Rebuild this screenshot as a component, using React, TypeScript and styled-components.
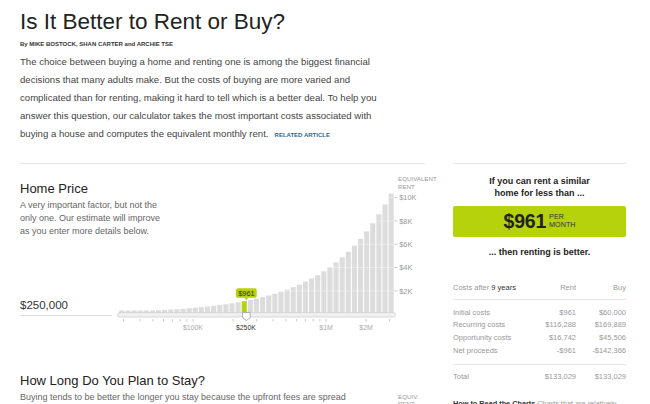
import React from 'react';
import styled, { createGlobalStyle } from 'styled-components';

const sans = `"Liberation Sans", Arial, Helvetica, sans-serif`;
const green = '#b5d20b';
const rule = '#e6e6e6';

const GlobalStyle = createGlobalStyle`
  html, body { margin: 0; padding: 0; background: #fff; }
  body { font-family: ${sans}; color: #333; overflow: hidden; }
  * { box-sizing: border-box; }
`;

const Page = styled.div`
  width: 650px;
  height: 404px;
  padding: 8px 0 0 20px;
  overflow: hidden;
`;

const Header = styled.header`
  width: 400px;
`;

const Title = styled.h1`
  margin: 0;
  font-size: 22.5px;
  line-height: 28px;
  font-weight: 400;
  color: #222;
  white-space: nowrap;
`;

const Byline = styled.div`
  margin-top: 3px;
  font-size: 6px;
  line-height: 10px;
  font-weight: 700;
  color: #333;
`;

const Lede = styled.p`
  margin: 4px 0 0;
  font-size: 9.6px;
  line-height: 18px;
  color: #444;
  white-space: nowrap;
`;

const Related = styled.a`
  margin-left: 6px;
  font-size: 6px;
  font-weight: 700;
  color: #326891;
  text-decoration: none;
`;

const Layout = styled.div`
  display: grid;
  grid-template-columns: 405px 173px;
  column-gap: 28px;
  margin-top: 19px;
  align-items: start;
`;

const MainColumn = styled.main`
  border-top: 1px solid ${rule};
`;

const SideColumn = styled.aside`
  border-top: 1px solid ${rule};
  padding-top: 11px;
`;

// chart and intro share one grid cell, intro sits over the empty left part of the chart
const Stack = styled.section`
  display: grid;
  & > * {
    grid-area: 1 / 1;
  }
`;

const Intro = styled.div`
  padding-top: 15px;
  align-self: start;
`;

const SectionTitle = styled.h2`
  margin: 0;
  font-size: 13px;
  line-height: 20px;
  font-weight: 400;
  color: #222;
  white-space: nowrap;
`;

const SectionText = styled.p`
  margin: 0;
  font-size: 9px;
  line-height: 13px;
  color: #666;
  white-space: nowrap;
`;

const ChartRow = styled.div`
  display: flex;
  align-items: flex-end;
  margin-top: 2px;
`;

const PriceField = styled.div`
  width: 92px;
  flex-shrink: 0;
  margin-bottom: 20px;
  padding-bottom: 2px;
  border-bottom: 1px solid #ddd;
`;

const PriceValue = styled.div`
  font-size: 11.5px;
  line-height: 16px;
  color: #333;
`;

const ChartSvg = styled.svg`
  display: block;
  flex-shrink: 0;
  overflow: visible;
  font-family: ${sans};
`;

const NextSection = styled.section`
  display: flex;
  margin-top: 35px;
`;

const NextIntro = styled.div`
  width: 378px;
`;

const AxisLabel = styled.div`
  padding-top: 21.5px;
  font-size: 6.2px;
  line-height: 7px;
  color: #999;
  text-transform: uppercase;
`;

const Verdict = styled.div`
  font-size: 9px;
  line-height: 12px;
  font-weight: 700;
  color: #222;
  text-align: center;
`;

const RentBox = styled.div`
  margin: 7px 0 9px;
  height: 31px;
  border-radius: 2px;
  background: ${green};
  display: flex;
  align-items: center;
  justify-content: center;
  gap: 3px;
`;

const RentValue = styled.span`
  font-size: 19.5px;
  font-weight: 700;
  color: #222;
  letter-spacing: -0.2px;
`;

const RentUnit = styled.span`
  font-size: 7.2px;
  line-height: 8px;
  color: #333;
  margin-top: -1px;
`;

const CostTable = styled.div`
  margin-top: 22.5px;
  font-size: 7.5px;
  color: #999;
`;

const CostGroup = styled.div<{ $pad: string; $line?: boolean }>`
  padding: ${(p) => p.$pad};
  border-bottom: ${(p) => (p.$line ? `1px solid ${rule}` : 'none')};
`;

const CostRow = styled.div<{ $tall?: boolean }>`
  display: grid;
  grid-template-columns: 1fr 60px 50px;
  line-height: ${(p) => (p.$tall ? '13px' : '12.67px')};
  white-space: nowrap;
`;

const Num = styled.span`
  text-align: right;
`;

const Strong = styled.span`
  color: #333;
`;

const ReadNote = styled.div`
  margin-top: 14.5px;
  font-size: 7.3px;
  line-height: 13px;
  color: #999;
  white-space: nowrap;
`;

const NoteHead = styled.b`
  color: #333;
`;

// chart geometry in page coordinates (viewBox matches the page offsets)
const BASE = 313.3;
const PER_K = 11.67;
const logX = (p: number) => 193 + (Math.log10(p) - 5) * 133;

const bars = Array.from({ length: 45 }, (_, i) => {
  const x = 119.3 + i * 6.12;
  const h = Math.max(3, 112.5 * Math.exp(0.0155 * (x + 2.55 - 387)));
  return { x, h, active: i === 20 };
});

const yTicks = [2, 4, 6, 8, 10];
const xTicks = [
  30e3, 40e3, 50e3, 60e3, 70e3, 80e3, 90e3, 100e3, 200e3, 300e3, 400e3, 500e3,
  600e3, 700e3, 800e3, 900e3, 1e6, 2e6, 3e6,
];
const xLabels = [
  { p: 100e3, t: '$100K' },
  { p: 250e3, t: '$250K', on: true },
  { p: 1e6, t: '$1M' },
  { p: 2e6, t: '$2M' },
];

function PriceChart() {
  return (
    <ChartSvg width={330} height={170} viewBox="112 165 330 170">
      {bars.map((b, i) => (
        <rect
          key={i}
          x={b.x}
          y={312.5 - b.h}
          width={5.1}
          height={b.h}
          fill={b.active ? green : '#dcdcdc'}
        />
      ))}
      {yTicks.map((v) => (
        <g key={v}>
          <line x1={118} x2={393} y1={BASE - v * PER_K} y2={BASE - v * PER_K} stroke="#fff" strokeOpacity={0.55} strokeWidth={0.8} />
          <line x1={394.5} x2={397.5} y1={BASE - v * PER_K} y2={BASE - v * PER_K} stroke="#bbb" strokeWidth={0.8} />
          <text x={399.3} y={BASE - v * PER_K + 2.6} fontSize={7.3} fill="#999">
            ${v}K
          </text>
        </g>
      ))}
      <text x={398} y={180.3} fontSize={6.2} fill="#999">EQUIVALENT</text>
      <text x={398} y={187.5} fontSize={6.2} fill="#999">RENT</text>

      <rect x={117.5} y={311.7} width={278} height={4.3} rx={2.1} fill="#f1f1f1" stroke="#cfcfcf" strokeWidth={0.8} />
      {xTicks.map((p) => (
        <line key={p} x1={logX(p)} x2={logX(p)} y1={318} y2={320.5} stroke="#bbb" strokeWidth={0.8} />
      ))}
      {xLabels.map((l) => (
        <text key={l.t} x={logX(l.p)} y={328.6} fontSize={6.9} fill={l.on ? '#333' : '#aaa'} textAnchor="middle">
          {l.t}
        </text>
      ))}

      <rect x={236} y={287.2} width={20.7} height={9.6} rx={1.8} fill={green} />
      <path d="M244.4,296.7 L246.4,299.3 L248.4,296.7 Z" fill={green} />
      <text x={246.4} y={294.6} fontSize={7.4} fill="#333" textAnchor="middle">$961</text>

      <path d="M242.6,311.4 H250.2 V316.6 L246.4,319.6 L242.6,316.6 Z" fill="#fff" stroke="#999" strokeWidth={0.8} strokeLinejoin="round" />
    </ChartSvg>
  );
}

const costs = [
  ['Initial costs', '$961', '$60,000'],
  ['Recurring costs', '$116,288', '$169,889'],
  ['Opportunity costs', '$16,742', '$45,506'],
  ['Net proceeds', '-$961', '-$142,366'],
];

export default function App() {
  return (
    <Page>
      <GlobalStyle />
      <Header>
        <Title>Is It Better to Rent or Buy?</Title>
        <Byline>By MIKE BOSTOCK, SHAN CARTER and ARCHIE TSE</Byline>
        <Lede>
          The choice between buying a home and renting one is among the biggest financial
          <br />
          decisions that many adults make. But the costs of buying are more varied and
          <br />
          complicated than for renting, making it hard to tell which is a better deal. To help you
          <br />
          answer this question, our calculator takes the most important costs associated with
          <br />
          buying a house and computes the equivalent monthly rent.
          <Related href="#">RELATED ARTICLE</Related>
        </Lede>
      </Header>

      <Layout>
        <MainColumn>
          <Stack>
            <ChartRow>
              <PriceField>
                <PriceValue>$250,000</PriceValue>
              </PriceField>
              <PriceChart />
            </ChartRow>
            <Intro>
              <SectionTitle>Home Price</SectionTitle>
              <SectionText>
                A very important factor, but not the
                <br />
                only one. Our estimate will improve
                <br />
                as you enter more details below.
              </SectionText>
            </Intro>
          </Stack>

          <NextSection>
            <NextIntro>
              <SectionTitle>How Long Do You Plan to Stay?</SectionTitle>
              <SectionText>
                Buying tends to be better the longer you stay because the upfront fees are spread
              </SectionText>
            </NextIntro>
            <AxisLabel>
              Equiv.
              <br />
              Rent
            </AxisLabel>
          </NextSection>
        </MainColumn>

        <SideColumn>
          <Verdict>
            If you can rent a similar
            <br />
            home for less than ...
          </Verdict>
          <RentBox>
            <RentValue>$961</RentValue>
            <RentUnit>
              PER
              <br />
              MONTH
            </RentUnit>
          </RentBox>
          <Verdict>... then renting is better.</Verdict>

          <CostTable>
            <CostGroup $pad="0 0 5.5px" $line>
              <CostRow $tall>
                <span>
                  Costs after <Strong>9 years</Strong>
                </span>
                <Num>Rent</Num>
                <Num>Buy</Num>
              </CostRow>
            </CostGroup>
            <CostGroup $pad="6.5px 0" $line>
              {costs.map(([label, rent, buy]) => (
                <CostRow key={label}>
                  <span>{label}</span>
                  <Num>{rent}</Num>
                  <Num>{buy}</Num>
                </CostRow>
              ))}
            </CostGroup>
            <CostGroup $pad="5px 0 0">
              <CostRow $tall>
                <span>Total</span>
                <Num>$133,029</Num>
                <Num>$133,029</Num>
              </CostRow>
            </CostGroup>
          </CostTable>

          <ReadNote>
            <NoteHead>How to Read the Charts</NoteHead> Charts that are relatively
          </ReadNote>
        </SideColumn>
      </Layout>
    </Page>
  );
}
